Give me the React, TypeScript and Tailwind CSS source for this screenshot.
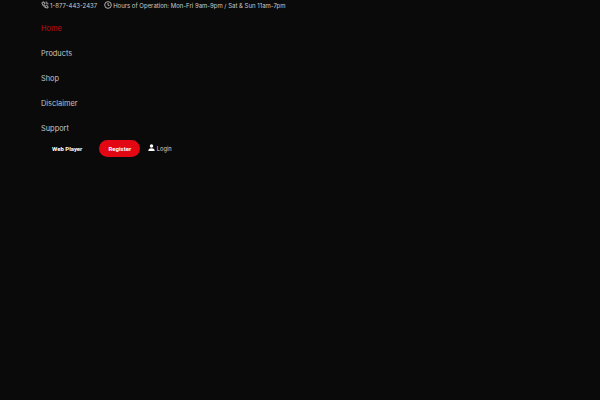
import * as React from 'react';

const navItems = ['Products', 'Shop', 'Disclaimer', 'Support'];

const PhoneIcon = () => (
  <svg viewBox="0 0 24 24" className="h-[8px] w-[8px] -translate-y-[1px]" fill="none" stroke="currentColor" strokeWidth="2.8">
    <path d="M6 3 L9 3 L11 8 L8.5 10 C10 13 11.5 15 14.5 16 L16.5 13.5 L21 16 L21 19 C21 20.5 19.5 21.5 18 21 C10 19.5 4.5 13.5 3 6.5 C3 4.5 4.5 3 6 3 Z" />
    <path d="M14 3 C18 3.5 20.5 6 21 10" />
    <path d="M14 7 C15.8 7.3 16.8 8.3 17 10" />
  </svg>
);

const ClockIcon = () => (
  <svg viewBox="0 0 24 24" className="h-[8px] w-[8px] -translate-y-[1px]" fill="none" stroke="currentColor" strokeWidth="2.6">
    <circle cx="12" cy="12" r="10" />
    <path d="M12 6 L12 13 L16.5 13" />
  </svg>
);

const UserIcon = () => (
  <svg viewBox="0 0 24 24" className="h-[7px] w-[7px] -translate-y-[1px]" fill="currentColor">
    <circle cx="12" cy="7" r="6" />
    <path d="M1 24 C1 17 6 14.5 12 14.5 C18 14.5 23 17 23 24 Z" />
  </svg>
);

export default function App() {
  return (
    <div className="min-h-[400px] w-[600px] overflow-hidden bg-[#0a0a0a] pl-[41px] font-['Inter',sans-serif]">
      {/* Top bar */}
      <div className="flex h-[11px] items-center text-[6px] leading-none text-[#c9c9c9]">
        <span className="flex items-center gap-[1px]">
          <PhoneIcon />
          <span>1-877-443-2437</span>
        </span>
        <span className="ml-[7px] flex items-center gap-[1px]">
          <ClockIcon />
          <span>Hours of Operation: Mon-Fri 9am-9pm / Sat &amp; Sun 11am-7pm</span>
        </span>
      </div>

      {/* Main nav */}
      <nav className="mt-[5px] flex flex-col text-[7.4px] leading-[25px] text-[#c4c4c4]">
        <a className="text-[#c00d14]">Home</a>
        {navItems.map((item) => (
          <a key={item}>{item}</a>
        ))}
      </nav>

      {/* Actions */}
      <div className="-mt-[1px] flex items-center">
        <span className="ml-[11px] font-['Roboto',sans-serif] text-[6px] font-bold text-white">Web Player</span>
        <span className="ml-[17px] flex h-[17px] w-[41px] items-center justify-center rounded-full bg-[#e30613] font-['Roboto',sans-serif] text-[6px] font-bold text-white">
          Register
        </span>
        <span className="ml-[8px] flex items-center gap-[1.5px] text-[5.7px] text-[#d6d6d6]">
          <span className="text-white"><UserIcon /></span>
          <span className="translate-y-[1px]">Login</span>
        </span>
      </div>
    </div>
  );
}
